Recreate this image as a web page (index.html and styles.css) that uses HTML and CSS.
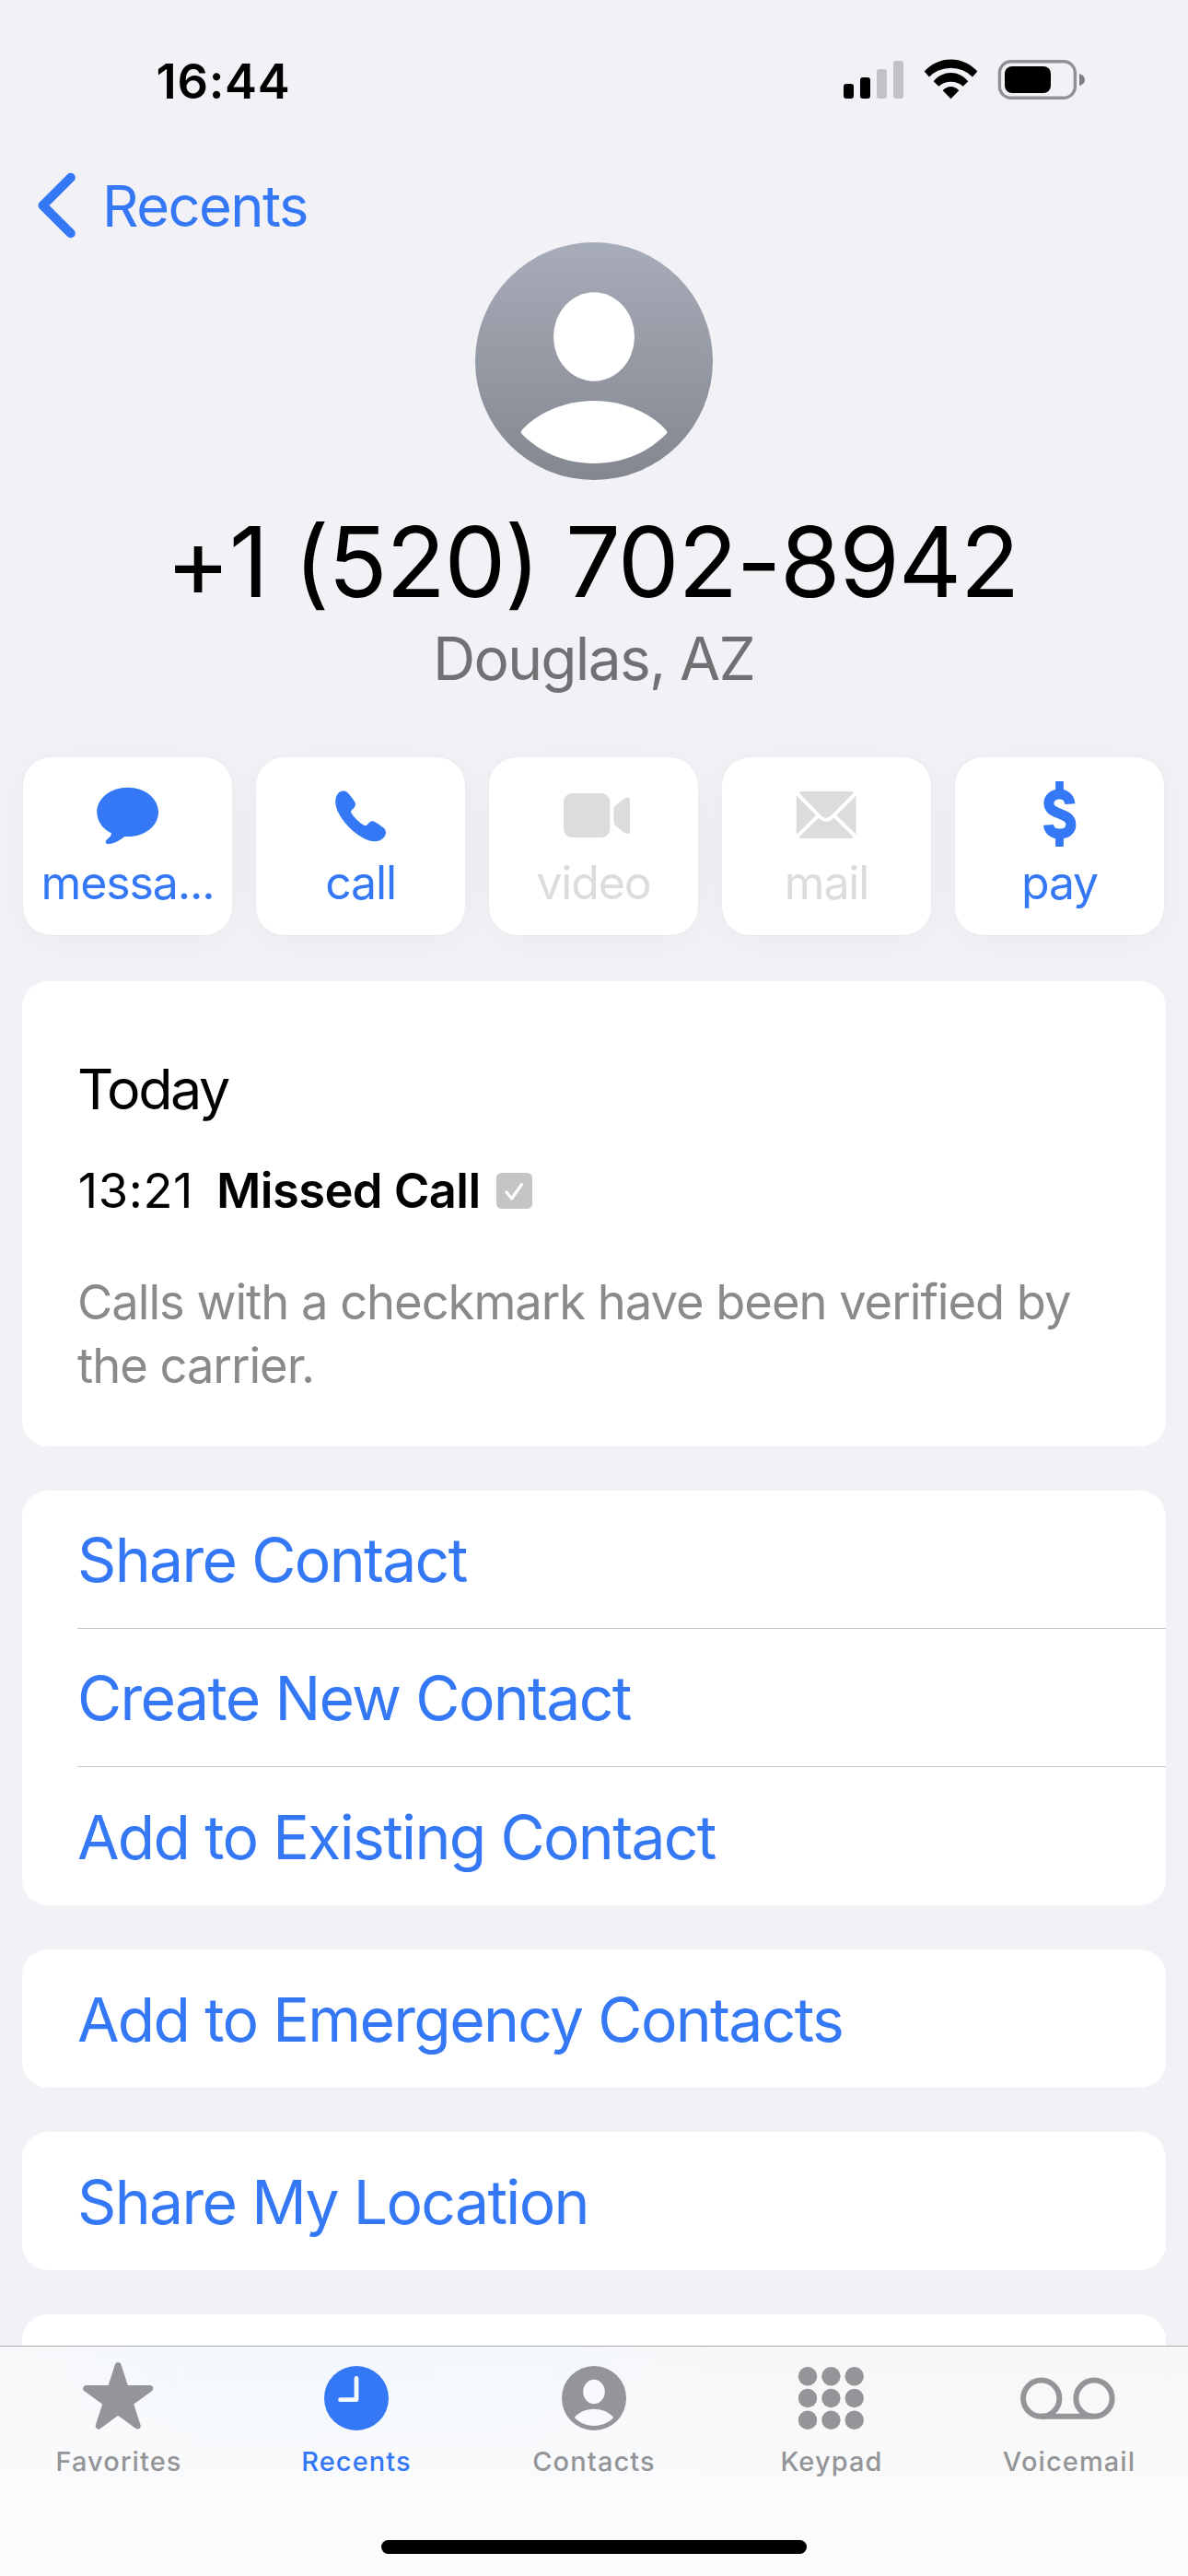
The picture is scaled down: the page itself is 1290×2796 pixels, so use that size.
FILE: index.html
```html
<!DOCTYPE html>
<html lang="en">
<head>
<meta charset="utf-8">
<title>Recents</title>
<link rel="stylesheet" href="styles.css">
</head>
<body>
<main class="screen">
  <header class="status">
    <span class="time">16:44</span>
    <svg class="status-icons" viewBox="916 60 264 56">
      <rect x="916" y="91" width="11" height="16" rx="3"/>
      <rect x="934" y="84" width="11" height="23" rx="3"/>
      <g fill="#c2c1c6"><rect x="952" y="75" width="11" height="32" rx="3"/><rect x="970" y="66" width="11" height="41" rx="3"/></g>
      <path d="M1003.7 77.6A38.4 38.4 0 0 1 1061.3 77.6L1056 83.4A33.5 33.5 0 0 0 1009 83.4ZM1013.7 88.2A24 24 0 0 1 1051.3 88.2L1045.7 93.7A20 20 0 0 0 1019.3 93.7ZM1023.7 98.3A11.2 11.2 0 0 1 1041.3 98.3L1032.5 107.2Z"/>
      <rect x="1085.4" y="66.7" width="82" height="39.6" rx="12.5" fill="none" stroke="#919195" stroke-width="3.4"/>
      <rect x="1091" y="72" width="50" height="29" rx="8"/>
      <path d="M1172 80Q1178 82 1178 86.6T1172 93.3Z" fill="#7f7f83"/>
    </svg>
  </header>
  <nav class="nav">
    <svg class="chevron" viewBox="38 184 48 78"><path d="M76.8 192.8L46.5 223L76.8 253.2"/></svg>
    <span class="back">Recents</span>
  </nav>
  <section class="scroll">
    <svg class="avatar" viewBox="0 0 258 258">
      <defs><linearGradient id="g" x1="0" y1="0" x2="0" y2="1"><stop offset="0" stop-color="#a7acb9"/><stop offset="1" stop-color="#83878f"/></linearGradient></defs>
      <circle cx="129" cy="129" r="129" fill="url(#g)"/>
      <ellipse cx="129" cy="102.5" rx="44" ry="48.2" fill="#fff"/>
      <path d="M50.2 204.5C65 187 95 172 129 172S193 187 207.8 204.5Q209 206 207.8 207.5C190 226 163 240 129 240S68 226 50.2 207.5Q49 206 50.2 204.5Z" fill="#fff"/>
    </svg>
    <h1 class="number">+1 (520) 702-8942</h1>
    <p class="place">Douglas, AZ</p>

    <div class="actions">
      <div class="action">
        <svg viewBox="78.6 844 120 84"><path d="M138.3 854.7C157 854.7 171.6 866.5 171.6 881.4S157 908 138.3 908Q136.5 908 134.8 907.9C130 912 123.5 915.8 117.5 916C114.5 916 113.6 914 114.8 912.2C117 910 120.5 907.5 120.7 904.5C111 899.5 104.9 891 104.9 881.4C104.9 866.5 119.6 854.7 138.3 854.7Z"/></svg>
        <span class="label">messa...</span>
      </div>
      <div class="action">
        <svg viewBox="331.8 844 120 84"><path d="M367.3 860.7C370 858.2 374.5 857.5 377.4 860.5C380 863.5 383 867 384.8 870C386.2 872.5 386 874.5 384.5 876.5L381.5 879.5C380.8 880.5 380.8 881.5 381.3 882.5C384.5 887.5 390 892.8 395 895.8C396.3 896.5 397.3 896.3 398.2 895.4L401.3 892.3C403 890.8 405.2 891 407 892.2C410.5 894.3 413.5 896.3 416.2 898.5C419.5 901.3 419.5 905.3 417 908.5C411 915.5 402 914 394 909.5C383 903.5 373.5 893.5 368 883.5C363.8 876 362 866 367.3 860.7Z"/></svg>
        <span class="label">call</span>
      </div>
      <div class="action off">
        <svg viewBox="585 844 120 84"><rect x="612" y="861" width="50.3" height="48" rx="9"/><path d="M666.4 877.5Q666.4 876 667.8 874.7L677.5 867Q684 863 684 869V901.5Q684 907.5 677.5 903.5L667.8 895.8Q666.4 894.5 666.4 893Z"/></svg>
        <span class="label">video</span>
      </div>
      <div class="action off">
        <svg viewBox="838.2 844 120 84"><rect x="865" y="859" width="64.8" height="51" rx="6"/><g fill="none" stroke="#fff" stroke-width="4"><path d="M864 859.5L891.5 887.3Q897.4 892.6 903.3 887.3L931 859.5"/><path d="M864 909.6L888.5 885.5M931 909.6L906.3 885.5"/></g></svg>
        <span class="label">mail</span>
      </div>
      <div class="action">
        <svg viewBox="1090.9 844 120 84"><path d="M1161.8 872.7C1161.3 866 1156.5 862 1150.3 862S1138.8 866 1138.8 871.8C1138.8 879 1145 881 1151 883.3S1162.8 888 1162.8 895C1162.8 901.5 1157.500 905 1150.800 905S1138.800 901.500 1138.400 895.300" fill="none" stroke="currentColor" stroke-width="11"/><rect x="1146" y="848" width="8.800" height="11" rx="1"/><rect x="1146" y="908" width="8.800" height="11" rx="1"/></svg>
        <span class="label">pay</span>
      </div>
    </div>

    <div class="card history">
      <h2 class="day">Today</h2>
      <div class="entry"><span class="when">13:21</span><span class="kind">Missed Call</span>
        <svg class="check" viewBox="539 1273 39 39"><rect x="539" y="1273" width="39" height="39" rx="5.5" fill="#c5c5c7"/><path d="M550 1294L555.7 1301L566.5 1285.5" fill="none" stroke="#fff" stroke-width="3.2" stroke-linecap="round" stroke-linejoin="round"/></svg>
      </div>
      <p class="note">Calls with a checkmark have been verified by<br>the carrier.</p>
    </div>

    <ul class="card list">
      <li>Share Contact</li>
      <li>Create New Contact</li>
      <li>Add to Existing Contact</li>
    </ul>
    <ul class="card list"><li>Add to Emergency Contacts</li></ul>
    <ul class="card list"><li>Share My Location</li></ul>
    <ul class="card list"><li></li></ul>
  </section>

  <footer class="tabbar">
    <div class="tabs">
      <div class="tab"><svg viewBox="79 2555 100 90"><path d="M128.2 2567.5L136.2 2592.5H162.7L141.2 2608.3L149.2 2633L128.2 2617.5L107.2 2633L115.2 2608.3L93.7 2592.5H120.2Z" stroke="currentColor" stroke-width="7" stroke-linejoin="round"/></svg><span>Favorites</span></div>
      <div class="tab active"><svg viewBox="337 2555 100 90"><circle cx="387" cy="2603" r="35"/><path d="M387 2581.5V2604.7H369.5" fill="none" stroke="#f7fafd" stroke-width="4.8" stroke-linecap="round" stroke-linejoin="round"/></svg><span>Recents</span></div>
      <div class="tab"><svg viewBox="595 2555 100 90"><circle cx="645" cy="2603" r="35"/><g fill="#f7f9fc"><ellipse cx="645" cy="2596" rx="11.8" ry="13.2"/><path d="M623.8 2624C628 2618.5 636 2614.7 645 2614.7S662 2618.5 666.2 2624C661 2629.5 654 2633 645 2633S629 2629.5 623.8 2624Z"/></g></svg><span>Contacts</span></div>
      <div class="tab"><svg viewBox="853 2555 100 90"><circle cx="877" cy="2579.3" r="10.2"/><circle cx="902.4" cy="2579.3" r="10.2"/><circle cx="927.7" cy="2579.3" r="10.2"/><circle cx="877" cy="2603" r="10.2"/><circle cx="902.4" cy="2603" r="10.2"/><circle cx="927.7" cy="2603" r="10.2"/><circle cx="877" cy="2626.7" r="10.2"/><circle cx="902.4" cy="2626.7" r="10.2"/><circle cx="927.7" cy="2626.7" r="10.2"/></svg><span>Keypad</span></div>
      <div class="tab"><svg class="wide" viewBox="1101 2555 120 90"><g fill="none" stroke="currentColor" stroke-width="6"><circle cx="1130.7" cy="2603.2" r="19.6"/><circle cx="1188" cy="2603.2" r="19.6"/><path d="M1130.7 2622.8H1188"/></g></svg><span>Voicemail</span></div>
    </div>
    <div class="home"></div>
  </footer>
</main>
</body>
</html>
```
FILE: styles.css
```css
* { box-sizing: border-box; }
body { margin: 0; background: #f2f1f6; font-family: Inter, "Liberation Sans", sans-serif; color: #000; }
h1, h2, p, ul { margin: 0; padding: 0; font-weight: 400; list-style: none; }
svg { display: block; flex: none; }

.screen { width: 1290px; height: 2796px; display: flex; flex-direction: column; overflow: hidden; }

.status { height: 183px; padding: 0 110px 7px 169.5px; flex: none; display: flex; align-items: center; justify-content: space-between; }
.time { font-size: 52.5px; font-weight: 600; letter-spacing: .7px; }
.status-icons { width: 264px; height: 56px; }

.nav { height: 80px; padding-left: 38px; flex: none; display: flex; align-items: center; color: #3478f6; }
.chevron { width: 48px; height: 78px; fill: none; stroke: currentColor; stroke-width: 10; stroke-linecap: round; stroke-linejoin: round; }
.back { margin-left: 25px; font-size: 61.5px; letter-spacing: -1.55px; }

.scroll { flex: 1; min-height: 0; overflow: hidden; display: flex; flex-direction: column; }
.avatar { width: 258px; height: 258px; align-self: center; }
.number { margin-top: 35px; padding-right: 4px; font-size: 106px; line-height: 107px; letter-spacing: -1.35px; text-align: center; white-space: nowrap; }
.place { margin-top: 17px; padding-right: 1px; font-size: 64px; line-height: 70px; letter-spacing: -1.7px; text-align: center; color: #717174; }

.actions { margin: 72px 26px 0 25px; display: flex; gap: 26px; flex: none; }
.action { flex: 1 1 0; min-width: 0; height: 193px; padding-top: 22px; display: flex; flex-direction: column; align-items: center; background: #fff; border-radius: 30px; color: #3478f6; box-shadow: 0 0 1px rgba(0, 0, 0, .12), 0 6px 40px rgba(0, 0, 0, .035); }
.action svg { width: 120px; height: 84px; fill: currentColor; }
.action.off { color: #dcdcde; }
.label { font-size: 50px; line-height: 60px; letter-spacing: -1.15px; white-space: nowrap; }

.card { margin: 48px 24px 0; padding-left: 60px; background: #fff; border-radius: 28px; flex: none; }
.history { height: 505px; margin-top: 50px; padding-top: 83px; }
.day { font-size: 61px; line-height: 69px; letter-spacing: -2.5px; }
.entry { margin-top: 43px; height: 64px; display: flex; align-items: center; font-size: 52.5px; white-space: nowrap; }
.when { margin-left: .7px; letter-spacing: .6px; }
.kind { margin-left: 25px; font-weight: 600; letter-spacing: -.6px; }
.check { width: 39px; height: 39px; margin-left: 17.5px; }
.note { margin-top: 54.5px; font-size: 52.5px; line-height: 69px; letter-spacing: -1.04px; color: #8a8a8d; white-space: nowrap; }

.list { color: #3478f6; font-size: 66px; letter-spacing: -1.67px; }
.list li { height: 150px; padding-top: 1px; display: flex; align-items: center; border-bottom: 1px solid #c6c6c8; }
.list li:last-child { border-bottom: 0; }

.tabbar { height: 250px; flex: none; border-top: 1px solid #abaaae; background: linear-gradient(rgba(251, 251, 252, 0), #fbfbfc 75%), linear-gradient(to right, #f8f8fa, #f3f8fc 18%, #f4f8fc 45%, #f7f7f8 62%); }
.tabs { display: flex; padding-top: 8px; }
.tab { flex: 1 1 0; display: flex; flex-direction: column; align-items: center; gap: 8px; color: #939598; font-size: 29px; line-height: 37px; font-weight: 500; letter-spacing: 1.1px; }
.tab.active { color: #3478f6; }
.tab svg { width: 100px; height: 90px; fill: currentColor; }
.tab svg.wide { width: 120px; }
.home { width: 462px; height: 15px; margin: 67px auto 0; border-radius: 8px; background: #000; }
```
